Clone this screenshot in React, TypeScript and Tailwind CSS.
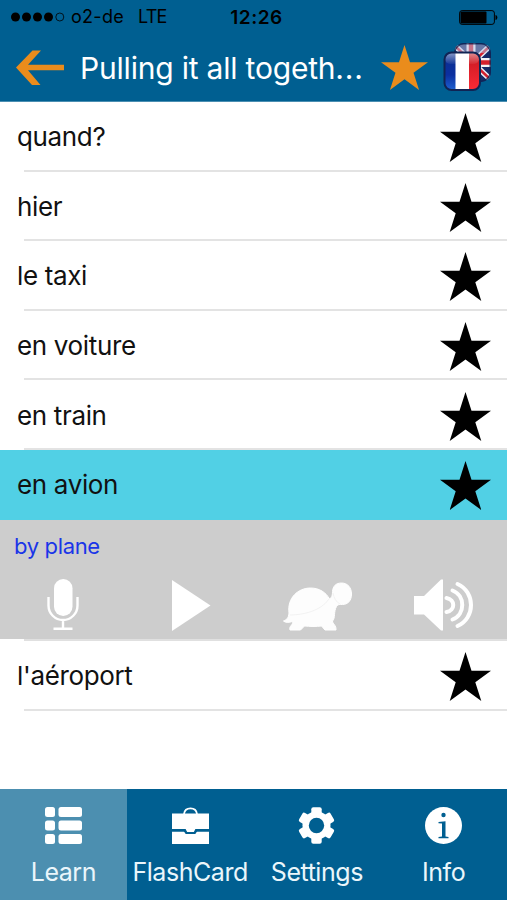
import { useState } from "react";
import clsx from "clsx";

type Phrase = {
  text: string;
  translation: string;
};

type TabId = "learn" | "flashcard" | "settings" | "info";

const phrases: Phrase[] = [
  { text: "quand?", translation: "when?" },
  { text: "hier", translation: "yesterday" },
  { text: "le taxi", translation: "the taxi" },
  { text: "en voiture", translation: "by car" },
  { text: "en train", translation: "by train" },
  { text: "en avion", translation: "by plane" },
  { text: "l'aéroport", translation: "the airport" },
];

const Star = ({ className }: { className: string }) => (
  <svg viewBox="0 0 51 49" preserveAspectRatio="none" fill="currentColor" className={className}>
    <path d="M25.5 0l6 18.7H51L35.3 30.2l6 18.8-15.8-11.6L9.7 49l6-18.8L0 18.7h19.5z" />
  </svg>
);

const BackArrow = () => (
  <svg viewBox="0 0 48 36" className="h-9 w-12 text-[#ea8c1c]" fill="currentColor">
    <path d="M0 17.500L16.500 0.500H25L12 14.700H48v5.600H12L24.500 35H16z" />
  </svg>
);

const Flags = () => (
  <svg viewBox="0 0 50 50" className="h-[50px] w-[50px]">
    <defs>
      <clipPath id="uk">
        <rect x="11" y="1" width="37" height="39" rx="10" />
      </clipPath>
      <clipPath id="fr">
        <rect x="1" y="10" width="36" height="38" rx="7" />
      </clipPath>
      <linearGradient id="shine" x1="0" y1="0" x2="0" y2="1">
        <stop offset="0" stopColor="#fff" stopOpacity="0.5" />
        <stop offset="1" stopColor="#fff" stopOpacity="0.05" />
      </linearGradient>
      <linearGradient id="blue" x1="0" y1="0" x2="0" y2="1">
        <stop offset="0" stopColor="#0a2f8c" />
        <stop offset="0.6" stopColor="#0b2fa0" />
        <stop offset="1" stopColor="#1d60d0" />
      </linearGradient>
      <linearGradient id="red" x1="0" y1="0" x2="0" y2="1">
        <stop offset="0" stopColor="#c41820" />
        <stop offset="1" stopColor="#fa2a36" />
      </linearGradient>
    </defs>
    <g clipPath="url(#uk)">
      <rect x="11" y="1" width="38" height="39" fill="#152a68" />
      <path d="M9 1l41 39M50 1L9 40" stroke="#e8eaf2" strokeWidth="5.500" />
      <path d="M9 1l41 39M50 1L9 40" stroke="#d3202e" strokeWidth="2.500" />
      <path d="M28 0v41M10 20.500h40" stroke="#f2f2f6" strokeWidth="9" />
      <path d="M28 0v41M10 20.500h40" stroke="#d3202e" strokeWidth="4.500" />
      <rect x="13" y="2" width="34" height="9" rx="7" fill="#b9c4e4" opacity="0.5" />
      <rect x="11" y="1" width="37" height="39" rx="10" fill="none" stroke="#0f2452" strokeWidth="3" opacity="0.8" />
    </g>
    <g clipPath="url(#fr)">
      <rect x="1" y="10" width="12" height="38" fill="url(#blue)" />
      <rect x="12.500" y="10" width="14" height="38" fill="#fff" />
      <rect x="26" y="10" width="12" height="38" fill="url(#red)" />
      <rect x="2" y="11" width="34" height="11" rx="5" fill="url(#shine)" />
    </g>
    <rect x="1.500" y="10.500" width="35.500" height="37.500" rx="7" fill="none" stroke="#102454" strokeWidth="2" />
  </svg>
);

const StatusBar = () => (
  <div className="grid h-[34px] grid-cols-3 items-center pl-[11px] pr-[9px] text-[18px] leading-none text-black">
    <div className="flex items-center">
      <svg viewBox="0 0 54 10" className="h-2.5 w-[54px] shrink-0">
        <circle cx="4.500" cy="5" r="4.500" />
        <circle cx="15.500" cy="5" r="4.500" />
        <circle cx="26.500" cy="5" r="4.500" />
        <circle cx="37.500" cy="5" r="4.500" />
        <circle cx="48.800" cy="5" r="4" fill="none" stroke="#000" strokeWidth="0.800" />
      </svg>
      <span className="ml-1.5 whitespace-nowrap tracking-[0.3px]">o2-de</span>
      <span className="ml-3.5 tracking-[-0.8px]">LTE</span>
    </div>
    <span className="ml-1 text-center text-[19px] font-semibold tracking-[0.5px]">12:26</span>
    <svg viewBox="0 0 39 15" className="h-[15px] w-[39px] justify-self-end">
      <rect x="0.600" y="0.600" width="34.800" height="13.800" rx="2.500" fill="none" stroke="#000" strokeWidth="1" />
      <rect x="1.500" y="1.500" width="26" height="12" rx="1" />
      <path d="M36.500 5c2.500.6 2.500 4.400 0 5z" />
    </svg>
  </div>
);

const MicIcon = () => (
  <svg viewBox="0 0 32 52" className="h-[52px] w-8">
    <rect x="7" y="0" width="18.500" height="37" rx="9.200" fill="#fff" />
    <path d="M1.500 18v8.500a14.500 14.500 0 0 0 29 0v-8.500M16 41V50M6.500 49.800h19" fill="none" stroke="#fff" strokeWidth="2.400" />
  </svg>
);

const PlayIcon = () => (
  <svg viewBox="0 0 39 51" className="ml-0.5 h-[51px] w-[39px]" fill="#fff">
    <path d="M0 0l38.500 25.500L0 51z" />
  </svg>
);

const TurtleIcon = () => (
  <svg viewBox="0 0 69 49" className="ml-0.5 h-[49px] w-[69px]">
    <path
      d="M6 31C4 16 15 6 27.500 6c9 0 15.500 4.500 19 11 2.500-1 3-4 3-7.500C50 4 53 1 58.500 1 65 1 68.500 6 68.500 12c0 7-4 10.500-9 10.500-3 0-4.500-.5-6 2-3 5-1 12-4 14.500 0 3 4 4 3.500 9H42c-1.500-1-2-3-3.500-4-5 .7-12 .5-17 0-1.500 1-2.500 3-4 4H7c-1.500-4 3.500-5 2.500-8.500C6 40.500 2.500 41 .5 39c3-1.500 5-2.500 5.500-8z"
      fill="#fdfdfd"
      stroke="#fff"
      strokeWidth="1"
    />
    <path d="M7 33c13 0 31-4 39-16M50 11c1 5 3 9 7 11" fill="none" stroke="#f1f1f1" strokeWidth="0.900" />
  </svg>
);

const SpeakerIcon = () => (
  <svg viewBox="0 0 60 52" className="h-[52px] w-[60px]">
    <path d="M0 17h10L27 0.500h2v51H27L10 35.500H0z" fill="#fff" />
    <path
      d="M32.500 19c9 1.500 9 12.500 0 14M38.500 11.500c13 5 13 24 0 29M43.500 5c18 8 18 34 0 42"
      fill="none"
      stroke="#fff"
      strokeWidth="4"
      strokeLinecap="round"
    />
  </svg>
);

const ListIcon = () => (
  <svg viewBox="0 0 37 37" className="size-[37px]" fill="#fff">
    <rect width="10" height="10" rx="2.500" />
    <rect x="13.500" width="23.500" height="10" rx="2.500" />
    <rect y="13.500" width="10" height="10" rx="2.500" />
    <rect x="13.500" y="13.500" width="23.500" height="10" rx="2.500" />
    <rect y="27" width="10" height="10" rx="2.500" />
    <rect x="13.500" y="27" width="23.500" height="10" rx="2.500" />
  </svg>
);

const BriefcaseIcon = () => (
  <svg viewBox="0 0 37 37" className="size-[37px]">
    <path d="M12 7c1-7.500 12-7.500 13 0" fill="none" stroke="#fff" strokeWidth="1.800" />
    <path d="M0 6.500h37V22H25l-2 3h-9l-2-3H0z" fill="#fff" />
    <path d="M0 24.700h12l2 2.300h9l2-2.300h12V37H0z" fill="#fff" />
    <path d="M0 23h13l1.500 3h8l1.500-3h13" fill="none" stroke="#005f91" strokeWidth="2" />
  </svg>
);

// Six teeth around a ring
const GearIcon = () => (
  <svg viewBox="0 0 37 37" className="size-[37px]">
    <g fill="#fff">
      <rect x="13.300" y="0.300" width="10.400" height="36.400" rx="2" />
      <rect x="13.300" y="0.300" width="10.400" height="36.400" rx="2" transform="rotate(60 18.500 18.500)" />
      <rect x="13.300" y="0.300" width="10.400" height="36.400" rx="2" transform="rotate(120 18.500 18.500)" />
      <circle cx="18.500" cy="18.500" r="14" />
    </g>
    <circle cx="18.500" cy="18.500" r="7.700" fill="#005f91" />
  </svg>
);

const InfoIcon = () => (
  <svg viewBox="0 0 37 37" className="size-[37px]">
    <circle cx="18.500" cy="18.500" r="18.500" fill="#fff" />
    <circle cx="18.500" cy="8" r="2.200" fill="#005f91" />
    <path d="M13.500 15l7-0.800V29.500l3 .6v1.200h-10v-1.200l3.500-.6V16.500l-3.500-.3z" fill="#005f91" />
  </svg>
);

const tabs = [
  { id: "learn" as TabId, label: "Learn", icon: ListIcon },
  { id: "flashcard" as TabId, label: "FlashCard", icon: BriefcaseIcon },
  { id: "settings" as TabId, label: "Settings", icon: GearIcon },
  { id: "info" as TabId, label: "Info", icon: InfoIcon },
];

const App = () => {
  const [activeTab, setActiveTab] = useState<TabId>("learn");
  const [selected, setSelected] = useState("en avion");

  return (
    <div className="flex h-[900px] w-[507px] flex-col overflow-hidden bg-white font-['Inter','Liberation_Sans',sans-serif]">
      <header className="h-[102px] shrink-0 border-b border-[#4b8fb2] bg-[#005f91]">
        <StatusBar />
        <div className="flex h-[67px] items-center pl-4 pr-3">
          <button aria-label="Back">
            <BackArrow />
          </button>
          <h1 className="ml-4 w-[284px] whitespace-nowrap text-[30px] leading-none tracking-[-0.2px] text-white">
            Pulling it all togeth<span className="tracking-[0.8px]">...</span>
          </h1>
          <Star className="ml-[17px] h-[45px] w-[47px] shrink-0 text-[#ea8c1c]" />
          <div className="-mt-0.5 ml-[15px] shrink-0">
            <Flags />
          </div>
        </div>
      </header>

      {/* Phrase list */}
      <main className="flex-1">
        {phrases.map((phrase) => {
          const open = phrase.text === selected;
          return (
            <div key={phrase.text}>
              <button
                onClick={() => setSelected(phrase.text)}
                className={clsx(
                  "flex h-[69.600px] w-full flex-col text-left",
                  open && "bg-[#51d0e5]"
                )}
              >
                <span className="flex w-full flex-1 items-center justify-between pl-[17px] pr-4">
                  <span className="pt-[3px] text-[26px] leading-none tracking-[-0.350px] text-[#111]">
                    {phrase.text}
                  </span>
                  <Star className="mt-1 h-[49px] w-[51px] text-black" />
                </span>
                <span className={clsx("ml-6 h-[2px] self-stretch", !open && "bg-[#e3e3e3]")} />
              </button>

              {open && (
                <>
                  <div className="h-[119.400px] bg-[#cdcdcd]">
                    <p className="pl-3.5 pt-3.5 text-[22px] leading-6 tracking-[-0.350px] text-[#1a35e8]">
                      {phrase.translation}
                    </p>
                    <div className="mt-[21px] grid grid-cols-4 items-end justify-items-center">
                      <MicIcon />
                      <PlayIcon />
                      <TurtleIcon />
                      <SpeakerIcon />
                    </div>
                  </div>
                  <div className="ml-6 h-[2px] bg-[#e0e0e0]" />
                </>
              )}
            </div>
          );
        })}
      </main>

      {/* Bottom tabs */}
      <nav className="grid h-[111px] shrink-0 grid-cols-4 bg-[#005f91]">
        {tabs.map((tab) => (
          <button
            key={tab.id}
            onClick={() => setActiveTab(tab.id)}
            className={clsx(
              "flex flex-col items-center pt-[18px]",
              activeTab === tab.id && "bg-[#4c8fb0]"
            )}
          >
            <tab.icon />
            <span className="mt-3.5 text-[25px] leading-[28px] tracking-[-0.450px] text-[#eaf6fb]">
              {tab.label}
            </span>
          </button>
        ))}
      </nav>
    </div>
  );
};

export default App;
